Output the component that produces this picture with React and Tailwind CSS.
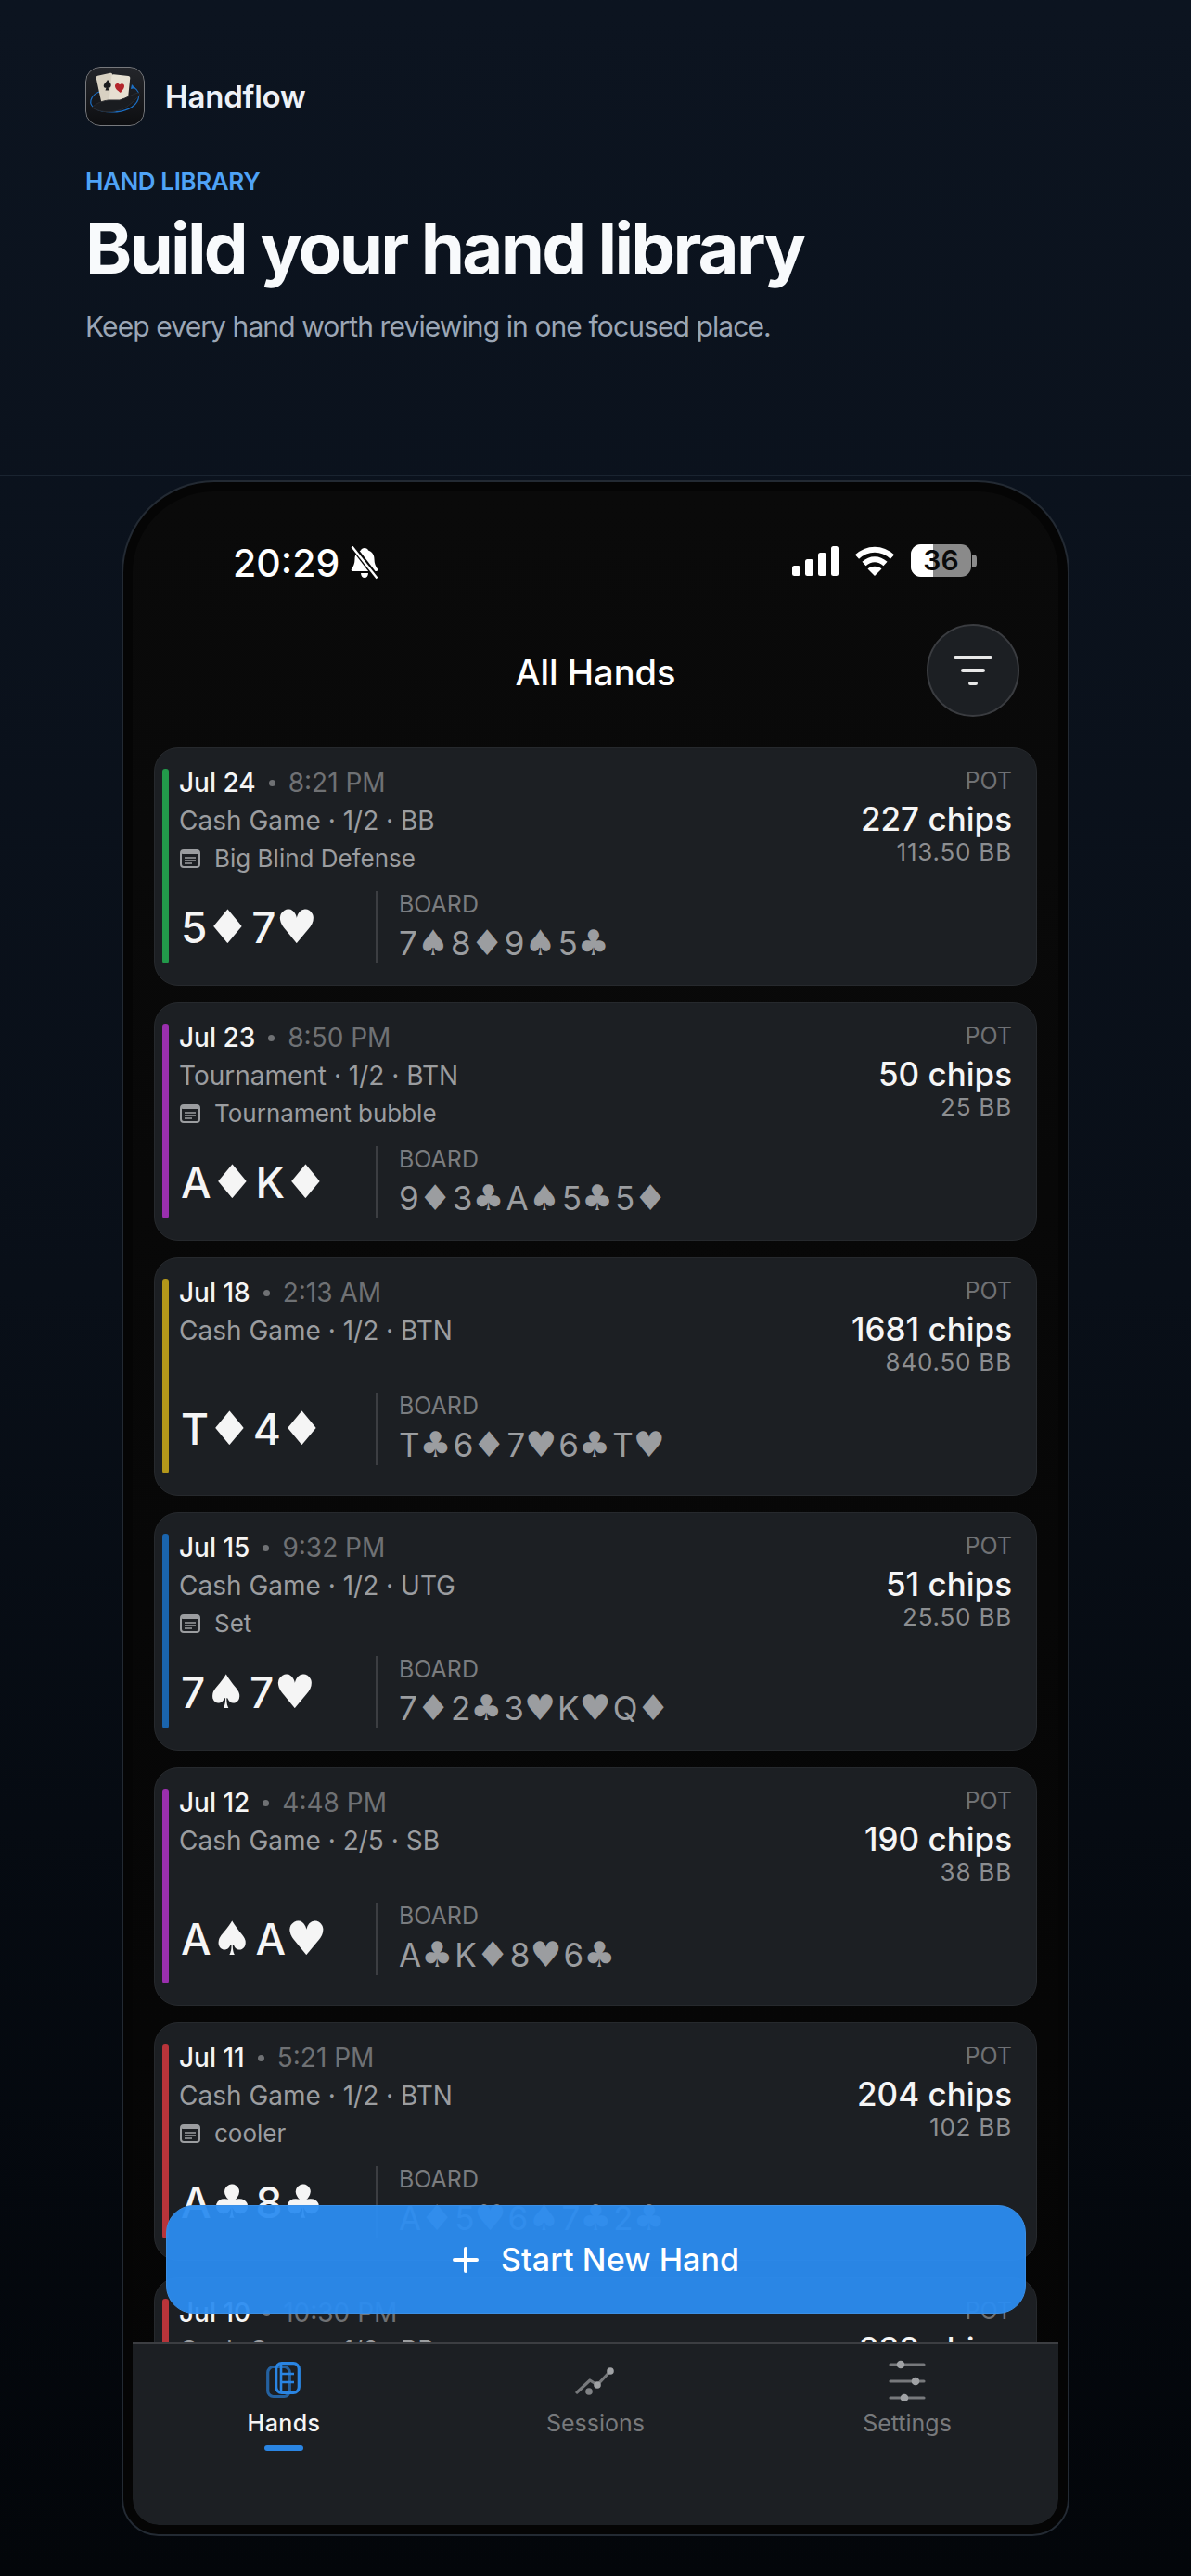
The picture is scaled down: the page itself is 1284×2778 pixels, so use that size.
const hands = [
  { date: 'Jul 24', time: '8:21 PM', game: 'Cash Game · 1/2 · BB', note: 'Big Blind Defense', hole: ['5♦', '7♥'], board: ['7♠', '8♦', '9♠', '5♣'], pot: '227 chips', bb: '113.50 BB', bar: 'bg-[#22994a]' },
  { date: 'Jul 23', time: '8:50 PM', game: 'Tournament · 1/2 · BTN', note: 'Tournament bubble', hole: ['A♦', 'K♦'], board: ['9♦', '3♣', 'A♠', '5♣', '5♦'], pot: '50 chips', bb: '25 BB', bar: 'bg-[#9a2fae]' },
  { date: 'Jul 18', time: '2:13 AM', game: 'Cash Game · 1/2 · BTN', hole: ['T♦', '4♦'], board: ['T♣', '6♦', '7♥', '6♣', 'T♥'], pot: '1681 chips', bb: '840.50 BB', bar: 'bg-[#b3971a]' },
  { date: 'Jul 15', time: '9:32 PM', game: 'Cash Game · 1/2 · UTG', note: 'Set', hole: ['7♠', '7♥'], board: ['7♦', '2♣', '3♥', 'K♥', 'Q♦'], pot: '51 chips', bb: '25.50 BB', bar: 'bg-[#1a64ad]' },
  { date: 'Jul 12', time: '4:48 PM', game: 'Cash Game · 2/5 · SB', hole: ['A♠', 'A♥'], board: ['A♣', 'K♦', '8♥', '6♣'], pot: '190 chips', bb: '38 BB', bar: 'bg-[#9a2fae]' },
  { date: 'Jul 11', time: '5:21 PM', game: 'Cash Game · 1/2 · BTN', note: 'cooler', hole: ['A♣', '8♣'], board: ['A♦', '5♥', '6♠', '7♣', '2♣'], pot: '204 chips', bb: '102 BB', bar: 'bg-[#b8343a]' },
  { date: 'Jul 10', time: '10:30 PM', game: 'Cash Game · 1/2 · BB', hole: ['K♠', 'Q♠'], board: ['K♦', '4♣', '9♥'], pot: '232 chips', bb: '116 BB', bar: 'bg-[#b8343a]' },
];

// dejavu's diamond is a bit narrower than in the reference
const CardText = ({ card, suitClass }) => (
  <span className="inline-flex items-baseline whitespace-nowrap">
    {card[0]}
    <span className={`inline-block font-['DejaVu_Sans'] ${suitClass} ${card[1] === '♦' ? 'scale-x-[1.08]' : ''}`}>{card[1]}</span>
  </span>
);

const HandCard = ({ hand }) => (
  <div className="relative h-[257px] shrink-0 rounded-[26px] border border-[#26292d] bg-[#1c1f23] pl-[26px] pr-[26px] pt-[22px]">
    <div className={`absolute bottom-[23px] left-[8px] top-[22px] w-[7px] rounded-[3px] ${hand.bar}`} />
    <div className="flex justify-between">
      <div className="min-w-0">
        <div className="flex h-[30px] items-center text-[28px] leading-[30px]">
          <span className="font-medium text-[#f5f5f5]">{hand.date}</span>
          <span className="ml-[14px] h-[7px] w-[7px] rounded-full bg-[#6f7174]" />
          <span className="ml-[14px] text-[#6f7174]">{hand.time}</span>
        </div>
        <div className="mt-[11px] h-[30px] text-[28px] leading-[30px] text-[#9b9da0]">{hand.game}</div>
        {hand.note && (
          <div className="mt-[11px] flex h-[30px] items-center text-[26px] leading-[30px] text-[#9b9da0]">
            <svg width="22" height="20" viewBox="0 0 22 20" className="ml-[1px] mr-[15px]" fill="none" stroke="#9b9da0">
              <rect x="1" y="1" width="20" height="18" rx="3" strokeWidth="2" />
              <rect x="1" y="1" width="20" height="4" rx="2" fill="#9b9da0" stroke="none" />
              <path d="M5 9h12M5 12h12M5 15h8" strokeWidth="1.6" />
            </svg>
            {hand.note}
          </div>
        )}
      </div>
      <div className="text-right">
        <div className="h-[26px] text-[25px] leading-[26px] text-[#6f7174]">POT</div>
        <div className="mt-[8px] h-[40px] text-[35px] font-medium leading-[40px] text-[#f5f5f5]">{hand.pot}</div>
        <div className="mt-[2px] h-[27px] text-[26px] leading-[27px] tracking-[0.8px] text-[#8c8e91]">{hand.bb}</div>
      </div>
    </div>
    <div className="mt-[20px] flex h-[78px] items-center">
      <div className="flex w-[212px] shrink-0 gap-[3px] pl-[2px] text-[46px] font-medium leading-none text-[#f5f5f5]">
        {hand.hole.map((c) => <CardText key={c} card={c} suitClass="text-[50px] leading-none" />)}
      </div>
      <div className="h-[78px] w-[2px] shrink-0 bg-[#3c3e42]" />
      <div className="ml-[23px] self-start">
        <div className="text-[25px] leading-[28px] text-[#7a7c7f]">BOARD</div>
        <div className="mt-[8px] flex h-[40px] items-center gap-[2px] text-[35px] leading-none text-[#9b9da0]">
          {hand.board.map((c, i) => <CardText key={i} card={c} suitClass="text-[38px] leading-none" />)}
        </div>
      </div>
    </div>
  </div>
);

const Logo = () => (
  <svg width="64" height="64" viewBox="0 0 64 64" className="shrink-0 rounded-[16px]">
    <defs>
      <linearGradient id="logoBg" x1="0" y1="0" x2="0" y2="1">
        <stop offset="0" stopColor="#24262b" />
        <stop offset="1" stopColor="#0d0e11" />
      </linearGradient>
    </defs>
    <rect x="0.5" y="0.5" width="63" height="63" rx="15.500" fill="url(#logoBg)" stroke="#77797d" />
    <path d="M52 22c5 3 7 8 5 13-3 9-15 14-28 14C14 49 4 44 6 36c1-4 4-7 9-9" fill="none" stroke="#1c6fc4" strokeWidth="1.200" />
    <path d="M50 19l4 4-5 1z" fill="#1c6fc4" />
    <rect x="14" y="8" width="18" height="29" rx="2" fill="#d8d1c2" transform="rotate(-12 23 22)" />
    <rect x="27" y="9" width="20" height="30" rx="2" fill="#e6e0d2" transform="rotate(6 37 24)" />
    <path d="M24 14c2.500 3 5 5 3 8-1 1.200-2.200.8-2.500.4l1 3h-4l1-3c-.4.4-1.800.8-2.500-.6-1.200-3 2-4.400 4-7.800z" fill="#1b1c1f" />
    <path d="M38 28c-3-2.400-6-4-6-7.500 0-2.800 3.400-3.500 5-1.200 2-2.300 5.500-1 5 2-.3 2.500-2 4-4 6.700z" fill="#b3262c" />
    <path d="M7 44c5-5 11-7 18-8h12c7-2 15-7 20-8 3 1 1 4-2 6-5 5-11 11-19 13-10 3-21 2-29-3z" fill="#1a1c20" stroke="#2a2c31" />
  </svg>
);

const StatusBar = () => (
  <div className="flex h-[124px] shrink-0 items-start justify-between pl-[108px] pr-[88px] pt-[54px] text-white">
    <div className="flex items-center">
      <span className="text-[41px] font-medium leading-[46px]">20:29</span>
      <svg width="34" height="36" viewBox="0 0 34 36" className="ml-[10px]" fill="white">
        <path d="M13 4.500c.5-3.500 7.500-3.500 8 0 4.500 1.500 6.500 5 6.500 9.500 0 4.500 1.500 8 3.500 10.500.8 1.200 0 2.500-1.500 2.500H4.500C3 27 2.200 25.700 3 24.500 5 22 6.500 18.500 6.500 14c0-4.500 2-8 6.500-9.500z" />
        <path d="M13 29h8c0 3-1.800 5-4 5s-4-2-4-5z" />
        <path d="M4 0l27 35" stroke="#0a0a0a" strokeWidth="6" />
        <path d="M3.500 .5l27 34" stroke="white" strokeWidth="2.400" />
      </svg>
    </div>
    <div className="flex items-center pt-[3px]">
      <svg width="50" height="32" viewBox="0 0 50 32" fill="white">
        <rect x="0" y="21" width="9" height="11" rx="2.500" />
        <rect x="14" y="14" width="9" height="18" rx="2.500" />
        <rect x="28" y="7" width="9" height="25" rx="2.500" />
        <rect x="42" y="0" width="8" height="32" rx="2.500" />
      </svg>
      <svg width="44" height="34" viewBox="0 0 44 34" className="ml-[17px]" fill="none" stroke="white" strokeWidth="6">
        <path d="M3 12.500c11-10.500 27-10.500 38 0" />
        <path d="M10.500 20c7-6.500 16-6.500 23 0" />
        <path d="M22 33l-7.500-7.500c4-3.600 11-3.600 15 0z" fill="white" stroke="none" />
      </svg>
      <div className="relative ml-[17px] h-[35px] w-[65px] overflow-hidden rounded-[11px] bg-[#8a8a8a]">
        <div className="h-full w-[24px] bg-white" />
        <span className="absolute inset-0 text-center text-[30px] font-semibold leading-[35px] text-[#0a0a0a]">36</span>
      </div>
      <div className="ml-[1px] h-[14px] w-[5px] rounded-r-[4px] bg-[#8a8a8a]" />
    </div>
  </div>
);

const TabBar = () => (
  <div className="relative z-10 grid h-[197px] shrink-0 grid-cols-[repeat(3,336px)] justify-center rounded-b-[28px] border-t-2 border-[#3c3e42] bg-[#1c1f23] text-center text-[25px] leading-[30px]">
    <div className="flex flex-col items-center">
      <svg width="44" height="44" viewBox="0 0 44 44" className="mt-[17px]" fill="none" stroke="#2a85e3" strokeWidth="3.200">
        <rect x="4.700" y="7.500" width="23.600" height="32" rx="6" opacity="0.65" />
        <rect x="13.700" y="3.700" width="24.600" height="31.600" rx="6" />
        <path d="M19 4v31M19 15h14M19 24h14" strokeWidth="2.600" />
      </svg>
      <span className="mt-[9px] font-medium tracking-[0.4px] text-[#f5f5f5]">Hands</span>
      <span className="mt-[9px] h-[6px] w-[42px] rounded-full bg-[#2a85e3]" />
    </div>
    <div className="flex flex-col items-center">
      <svg width="44" height="44" viewBox="0 0 44 44" className="mt-[17px]" fill="none">
        <path d="M2 35l14-13 8 5 14-15" stroke="#77797c" strokeWidth="3.200" strokeLinecap="round" strokeLinejoin="round" />
        <circle cx="38" cy="12" r="3.800" fill="#a0a2a5" />
        <circle cx="24" cy="27" r="3.800" fill="#a0a2a5" />
        <circle cx="15" cy="34" r="3.800" fill="#808285" />
      </svg>
      <span className="mt-[9px] text-[#77797c]">Sessions</span>
    </div>
    <div className="flex flex-col items-center">
      <svg width="44" height="44" viewBox="0 0 44 44" className="mt-[17px]" fill="none" stroke="#77797c" strokeWidth="3.200" strokeLinecap="round">
        <path d="M4 5h36M4 23h36M4 41h36" />
        <g fill="#a0a2a5" stroke="none">
          <circle cx="15" cy="5" r="4.300" />
          <circle cx="31" cy="23" r="4.300" />
          <circle cx="19" cy="41" r="4.300" />
        </g>
      </svg>
      <span className="mt-[9px] text-[#77797c]">Settings</span>
    </div>
  </div>
);

const App = () => (
  <div className="flex h-[2778px] w-full flex-col overflow-hidden bg-gradient-to-b from-[#0c1420] via-[#090f18] to-[#03060a] font-['Inter',sans-serif]">
    <header className="h-[513px] shrink-0 border-b border-[#1a2430] pl-[92px] pt-[72px]">
      <div className="flex items-center">
        <Logo />
        <span className="ml-[22px] pt-[2px] text-[33px] font-semibold tracking-[-0.2px] text-[#edf1f8]">Handflow</span>
      </div>
      <div className="mt-[45px] text-[26px] font-semibold leading-[30px] tracking-[-0.4px] text-[#4fa3f7]">HAND LIBRARY</div>
      <h1 className="mt-[11px] text-[76px] font-bold leading-[90px] tracking-[-2.75px] text-[#f8fafc]">Build your hand library</h1>
      <p className="mt-[20px] text-[30px] leading-[40px] tracking-[-0.9px] text-[#9ba6b5]">Keep every hand worth reviewing in one focused place.</p>
    </header>

    <div className="mx-[131px] mt-[5px] h-[2217px] rounded-b-[40px] rounded-t-[100px] border-2 border-[#232a33] bg-[#050505] p-[10px]">
      <div className="relative flex h-full flex-col overflow-hidden rounded-b-[28px] rounded-t-[88px] bg-gradient-to-b from-[#0a0a0a] to-[#050505]">
        <StatusBar />
        <div className="relative flex h-[128px] shrink-0 items-center justify-center pt-[14px]">
          <h2 className="text-[38px] font-medium text-white">All Hands</h2>
          <button className="absolute right-[42px] top-[19px] flex h-[100px] w-[100px] flex-col items-center justify-center gap-[10px] rounded-full border-2 border-[#3a3c40] bg-[#1c1f23]">
            <span className="h-[4px] w-[42px] rounded-full bg-[#e8e8e8]" />
            <span className="h-[4px] w-[26px] rounded-full bg-[#e8e8e8]" />
            <span className="h-[4px] w-[10px] rounded-full bg-[#e8e8e8]" />
          </button>
        </div>
        <div className="flex min-h-0 flex-1 flex-col gap-[18px] overflow-hidden px-[23px] pt-[24px]">
          {hands.map((hand) => <HandCard key={hand.date} hand={hand} />)}
        </div>
        <button className="absolute bottom-[228px] left-[36px] right-[35px] z-20 flex h-[117px] items-center justify-center gap-[24px] rounded-[30px] border border-[#3a8fe6] bg-[#2b8cf0]/95 text-[34px] font-medium tracking-[0.1px] text-white">
          <svg width="28" height="28" viewBox="0 0 28 28" stroke="white" strokeWidth="4" strokeLinecap="round">
            <path d="M14 2v24M2 14h24" />
          </svg>
          Start New Hand
        </button>
        <TabBar />
      </div>
    </div>
  </div>
);

export default App;
